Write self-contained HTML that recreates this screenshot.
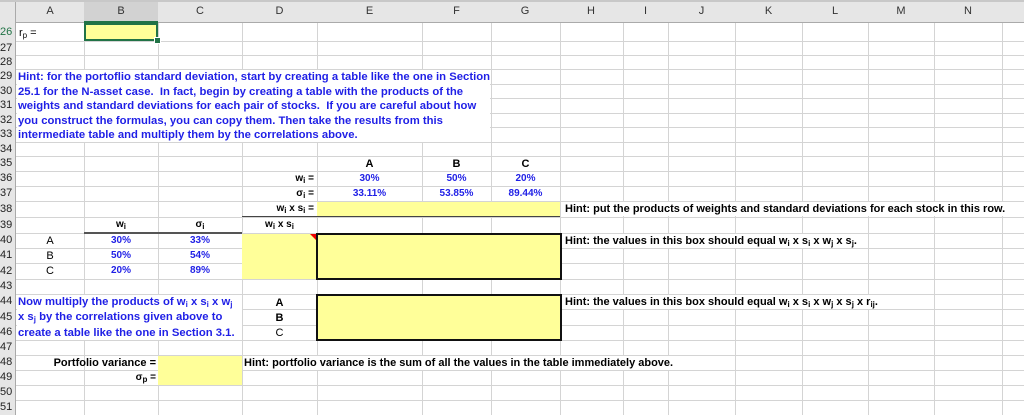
<!DOCTYPE html>
<html><head><meta charset="utf-8"><style>
body{margin:0;width:1024px;height:415px;overflow:hidden;background:#fff;position:relative;font-family:"Liberation Sans",Arial,sans-serif;}
.a{position:absolute;}
.v{position:absolute;top:23px;height:392px;width:1px;background:#d4d4d4;}
.h{position:absolute;left:16px;width:1008px;height:1px;background:#d4d4d4;}
.rn{position:absolute;left:0;width:15px;font-size:11px;color:#222;text-align:left;line-height:15px;}
.ch{position:absolute;top:5px;font-size:11px;color:#333;text-align:center;}
.t{position:absolute;font-size:11px;font-weight:bold;white-space:nowrap;line-height:14px;}
.w{background:#fff;padding-right:2px;}
.b{color:#1f1fe6;}
.y{position:absolute;background:#ffff99;}
sub{font-size:8px;vertical-align:-2px;line-height:0;}
</style></head><body>
<div class="a" style="left:0;top:0;width:1024px;height:23px;background:#e6e6e6;border-bottom:1px solid #aaa;box-sizing:border-box"></div>
<div class="a" style="left:0;top:0;width:16px;height:415px;background:#e6e6e6;border-right:1px solid #aaa;box-sizing:border-box"></div>
<div class="a" style="left:84px;top:0;width:74px;height:23px;background:#d2d2d2;border-bottom:2px solid #217346;box-sizing:border-box"></div>
<div class="a" style="left:0;top:0;width:1024px;height:2px;background:#c8c8c8"></div>
<div class="ch" style="left:16px;width:68px">A</div><div class="ch" style="left:84px;width:74px">B</div><div class="ch" style="left:158px;width:84px">C</div><div class="ch" style="left:242px;width:75px">D</div><div class="ch" style="left:317px;width:105px">E</div><div class="ch" style="left:422px;width:69px">F</div><div class="ch" style="left:491px;width:68px">G</div><div class="ch" style="left:559px;width:64px">H</div><div class="ch" style="left:623px;width:45px">I</div><div class="ch" style="left:668px;width:67px">J</div><div class="ch" style="left:735px;width:67px">K</div><div class="ch" style="left:802px;width:66px">L</div><div class="ch" style="left:868px;width:66px">M</div><div class="ch" style="left:934px;width:68px">N</div>
<div class="v" style="left:84px"></div><div class="v" style="left:158px"></div><div class="v" style="left:242px"></div><div class="v" style="left:317px"></div><div class="v" style="left:422px"></div><div class="v" style="left:491px"></div><div class="v" style="left:560px"></div><div class="v" style="left:623px"></div><div class="v" style="left:668px"></div><div class="v" style="left:735px"></div><div class="v" style="left:802px"></div><div class="v" style="left:868px"></div><div class="v" style="left:934px"></div><div class="v" style="left:1002px"></div>
<div class="h" style="top:41px"></div><div class="h" style="top:55px"></div><div class="h" style="top:69px"></div><div class="h" style="top:84px"></div><div class="h" style="top:98px"></div><div class="h" style="top:113px"></div><div class="h" style="top:127px"></div><div class="h" style="top:142px"></div><div class="h" style="top:156px"></div><div class="h" style="top:171px"></div><div class="h" style="top:186px"></div><div class="h" style="top:201px"></div><div class="h" style="top:217px"></div><div class="h" style="top:233px"></div><div class="h" style="top:248px"></div><div class="h" style="top:263px"></div><div class="h" style="top:279px"></div><div class="h" style="top:294px"></div><div class="h" style="top:309px"></div><div class="h" style="top:325px"></div><div class="h" style="top:340px"></div><div class="h" style="top:355px"></div><div class="h" style="top:370px"></div><div class="h" style="top:385px"></div><div class="h" style="top:400px"></div>
<div class="rn" style="top:25px;color:#217346">26</div><div class="rn" style="top:41px">27</div><div class="rn" style="top:55px">28</div><div class="rn" style="top:69px">29</div><div class="rn" style="top:84px">30</div><div class="rn" style="top:98px">31</div><div class="rn" style="top:113px">32</div><div class="rn" style="top:127px">33</div><div class="rn" style="top:142px">34</div><div class="rn" style="top:156px">35</div><div class="rn" style="top:171px">36</div><div class="rn" style="top:186px">37</div><div class="rn" style="top:202px">38</div><div class="rn" style="top:218px">39</div><div class="rn" style="top:233px">40</div><div class="rn" style="top:248px">41</div><div class="rn" style="top:264px">42</div><div class="rn" style="top:279px">43</div><div class="rn" style="top:294px">44</div><div class="rn" style="top:310px">45</div><div class="rn" style="top:325px">46</div><div class="rn" style="top:340px">47</div><div class="rn" style="top:355px">48</div><div class="rn" style="top:370px">49</div><div class="rn" style="top:385px">50</div><div class="rn" style="top:400px">51</div>
<div class="a" style="left:17px;top:70px;width:473px;height:72px;background:#fff"></div>
<div class="a" style="left:17px;top:295px;width:225px;height:45px;background:#fff"></div>
<div class="y" style="left:84px;top:23px;width:74px;height:18px;border:2px solid #217346;box-sizing:border-box"></div>
<div class="a" style="left:154px;top:37px;width:5px;height:5px;background:#217346;border:1px solid #fff"></div>
<div class="y" style="left:317px;top:202px;width:243px;height:15px"></div>
<div class="a" style="left:242px;top:216px;width:318px;height:1px;background:#444"></div>
<div class="a" style="left:84px;top:232px;width:158px;height:2px;background:#555"></div>
<div class="y" style="left:242px;top:234px;width:75px;height:45px"></div>
<div class="a" style="left:310px;top:234px;width:0;height:0;border-left:6px solid transparent;border-top:6px solid #e00"></div>
<div class="y" style="left:316px;top:233px;width:246px;height:47px;border:2px solid #111;box-sizing:border-box"></div>
<div class="y" style="left:316px;top:294px;width:246px;height:47px;border:2px solid #111;box-sizing:border-box"></div>
<div class="y" style="left:158px;top:356px;width:84px;height:29px"></div>
<div class="t" style="left:19px;top:26px;font-weight:normal">r<sub>p</sub> =</div>
<div class="t b" style="left:18px;top:70px;font-size:11.3px;line-height:14.5px">Hint: for the portoflio standard deviation, start by creating a table like the one in Section<br>25.1 for the N-asset case.&nbsp; In fact, begin by creating a table with the products of the<br>weights and standard deviations for each pair of stocks.&nbsp; If you are careful about how<br>you construct the formulas, you can copy them. Then take the results from this<br>intermediate table and multiply them by the correlations above.</div>
<div class="t" style="left:317px;width:105px;text-align:center;top:157px">A</div><div class="t" style="left:422px;width:69px;text-align:center;top:157px">B</div><div class="t" style="left:491px;width:69px;text-align:center;top:157px">C</div>
<div class="t" style="left:242px;width:72px;text-align:right;top:172px;font-size:10px">w<sub>i</sub> =</div>
<div class="t b" style="left:317px;width:105px;text-align:center;top:172px;font-size:10px">30%</div><div class="t b" style="left:422px;width:69px;text-align:center;top:172px;font-size:10px">50%</div><div class="t b" style="left:491px;width:69px;text-align:center;top:172px;font-size:10px">20%</div>
<div class="t" style="left:242px;width:72px;text-align:right;top:187px;font-size:10px">σ<sub>i</sub> =</div>
<div class="t b" style="left:317px;width:105px;text-align:center;top:187px;font-size:10px">33.11%</div><div class="t b" style="left:422px;width:69px;text-align:center;top:187px;font-size:10px">53.85%</div><div class="t b" style="left:491px;width:69px;text-align:center;top:187px;font-size:10px">89.44%</div>
<div class="t" style="left:242px;width:72px;text-align:right;top:202px;font-size:10px">w<sub>i</sub> x s<sub>i</sub> =</div>
<div class="t" style="left:242px;width:75px;text-align:center;top:218px;font-size:10px">w<sub>i</sub> x s<sub>i</sub></div>
<div class="t" style="left:84px;width:74px;text-align:center;top:218px;font-size:10px">w<sub>i</sub></div>
<div class="t" style="left:158px;width:84px;text-align:center;top:218px;font-size:10px">σ<sub>i</sub></div>
<div class="t w" style="left:562px;padding-left:3px;top:202px;height:14px">Hint: put the products of weights and standard deviations for each stock in this row.</div>
<div class="t w" style="left:562px;padding-left:3px;top:234px;height:14px">Hint: the values in this box should equal w<sub>i</sub> x s<sub>i</sub> x w<sub>j</sub> x s<sub>j</sub>.</div>
<div class="t w" style="left:562px;padding-left:3px;top:295px;height:14px">Hint: the values in this box should equal w<sub>i</sub> x s<sub>i</sub> x w<sub>j</sub> x s<sub>j</sub> x r<sub>ij</sub>.</div>
<div class="t" style="left:16px;width:68px;text-align:center;top:234px;font-weight:normal">A</div><div class="t" style="left:16px;width:68px;text-align:center;top:249px;font-weight:normal">B</div><div class="t" style="left:16px;width:68px;text-align:center;top:264px;font-weight:normal">C</div>
<div class="t b" style="left:84px;width:74px;text-align:center;top:234px;font-size:10px">30%</div><div class="t b" style="left:84px;width:74px;text-align:center;top:249px;font-size:10px">50%</div><div class="t b" style="left:84px;width:74px;text-align:center;top:264px;font-size:10px">20%</div>
<div class="t b" style="left:158px;width:84px;text-align:center;top:234px;font-size:10px">33%</div><div class="t b" style="left:158px;width:84px;text-align:center;top:249px;font-size:10px">54%</div><div class="t b" style="left:158px;width:84px;text-align:center;top:264px;font-size:10px">89%</div>
<div class="t b" style="left:18px;top:295px;font-size:11.3px;line-height:15.3px">Now multiply the products of w<sub>i</sub> x s<sub>i</sub> x w<sub>j</sub><br>x s<sub>j</sub> by the correlations given above to<br>create a table like the one in Section 3.1.</div>
<div class="t" style="left:242px;width:75px;text-align:center;top:296px">A</div><div class="t" style="left:242px;width:75px;text-align:center;top:311px">B</div><div class="t" style="left:242px;width:75px;text-align:center;top:326px;font-weight:normal">C</div>
<div class="t" style="left:20px;width:136px;text-align:right;top:356px">Portfolio variance =</div>
<div class="t" style="left:20px;width:136px;text-align:right;top:371px;font-size:10px">σ<sub>p</sub> =</div>
<div class="t w" style="left:243px;padding-left:1px;top:356px;height:14px">Hint: portfolio variance is the sum of all the values in the table immediately above.</div>
</body></html>
